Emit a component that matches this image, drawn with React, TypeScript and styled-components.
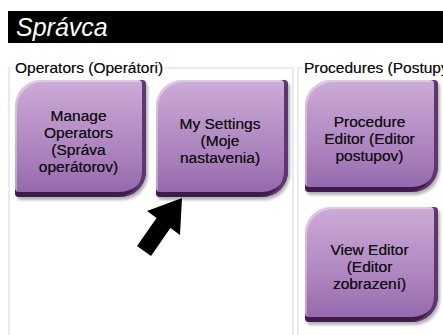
import React from "react";
import styled, { createGlobalStyle } from "styled-components";

const GlobalStyle = createGlobalStyle`
  html, body { margin: 0; padding: 0; background: #ffffff; }
  body { font-family: "Liberation Sans", Arial, sans-serif; }
`;

const Page = styled.div`
  position: relative;
  width: 443px;
  height: 335px;
  overflow: hidden;
  background: #ffffff;
  padding-top: 11px;
  box-sizing: border-box;
`;

const Header = styled.div`
  margin-left: 8px;
  height: 32px;
  background: #000000;
  color: #ffffff;
  font-family: "Liberation Sans", Arial, sans-serif;
  font-style: italic;
  font-size: 25px;
  line-height: 33px;
  padding-left: 8px;
`;

const Groups = styled.div`
  display: flex;
  gap: 3px;
  margin-top: 17px;
  margin-left: 8px;
  width: 460px;
`;

const Group = styled.fieldset<{ $width: number }>`
  margin: 0;
  padding: 4px 0 0 0;
  width: ${(p) => p.$width}px;
  min-height: 320px;
  box-sizing: border-box;
  border: 2px solid #ebebeb;
  flex-shrink: 0;
`;

const Legend = styled.legend`
  margin-left: 3px;
  padding: 0 2px 0 2px;
  font-size: 15.5px;
  line-height: 16px;
  color: #111111;
  white-space: nowrap;
  text-shadow: 0 0 0.4px rgba(0, 0, 0, 0.6);
`;

const Row = styled.div`
  display: flex;
  gap: 10px;
  padding-left: 5px;
`;

const Column = styled.div`
  display: flex;
  flex-direction: column;
  gap: 15px;
  padding-left: 6px;
`;

const Tile = styled.div<{ $w: number; $h: number }>`
  width: ${(p) => p.$w}px;
  height: ${(p) => p.$h}px;
  box-sizing: border-box;
  display: flex;
  align-items: center;
  justify-content: center;
  text-align: center;
  padding: 4px 8px 0 4px;
  border-radius: 26px 4px 26px 4px;
  background: linear-gradient(
    180deg,
    #cdacd7 0%,
    #bd98cb 30%,
    #aa81bd 65%,
    #9266aa 100%
  );
  box-shadow: inset -4px 0 0 #5e3670, inset 0 -5px 0 #3d1b4c,
    inset 2px 2px 0 rgba(255, 255, 255, 0.35), 2px 3px 3px rgba(0, 0, 0, 0.3);
  color: #111111;
  font-size: 15.5px;
  line-height: 17px;
  text-shadow: 0 0 0.5px rgba(0, 0, 0, 0.7);
`;

const ArrowMark = styled.svg`
  position: absolute;
  left: 134px;
  top: 195px;
  width: 52px;
  height: 64px;
`;

export default function App() {
  return (
    <>
      <GlobalStyle />
      <Page>
        <Header>Správca</Header>
        <Groups>
          <Group $width={286}>
            <Legend>Operators (Operátori)</Legend>
            <Row>
              <Tile $w={131} $h={117}>
                Manage
                <br />
                Operators
                <br />
                (Správa
                <br />
                operátorov)
              </Tile>
              <Tile $w={132} $h={117}>
                My Settings
                <br />
                (Moje
                <br />
                nastavenia)
              </Tile>
            </Row>
          </Group>
          <Group $width={160}>
            <Legend>Procedures (Postupy)</Legend>
            <Column>
              <Tile $w={133} $h={112}>
                Procedure
                <br />
                Editor (Editor
                <br />
                postupov)
              </Tile>
              <Tile $w={133} $h={115}>
                View Editor
                <br />
                (Editor
                <br />
                zobrazení)
              </Tile>
            </Column>
          </Group>
        </Groups>
        <ArrowMark viewBox="134 195 52 64">
          <polygon
            points="182,198 147,211 156.6,218 137,246 151,256 170.4,228 180,235"
            fill="#000000"
          />
        </ArrowMark>
      </Page>
    </>
  );
}
